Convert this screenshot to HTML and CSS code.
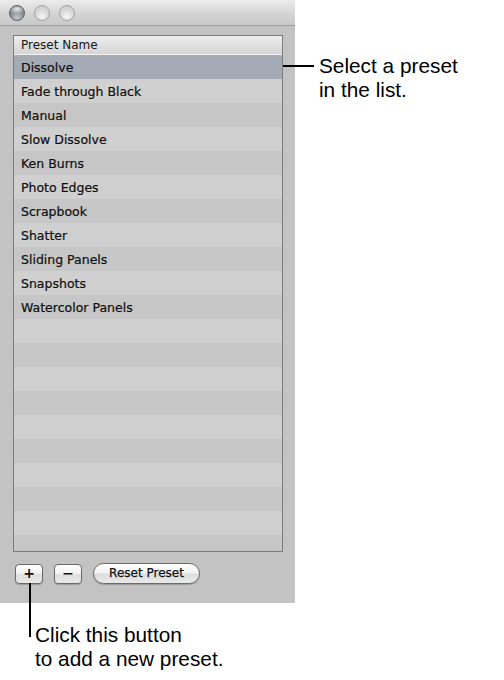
FILE: index.html
```html
<!DOCTYPE html>
<html>
<head>
<meta charset="utf-8">
<link rel="stylesheet" href="styles.css">
</head>
<body>
<div class="page">
  <div class="window">
    <div class="titlebar">
      <span class="light graphite"></span>
      <span class="light"></span>
      <span class="light"></span>
    </div>
    <div class="content">
      <div class="list">
        <div class="header">Preset Name</div>
        <div class="row selected">Dissolve</div>
        <div class="row">Fade through Black</div>
        <div class="row">Manual</div>
        <div class="row">Slow Dissolve</div>
        <div class="row">Ken Burns</div>
        <div class="row">Photo Edges</div>
        <div class="row">Scrapbook</div>
        <div class="row">Shatter</div>
        <div class="row">Sliding Panels</div>
        <div class="row">Snapshots</div>
        <div class="row">Watercolor Panels</div>
        <div class="row"></div>
        <div class="row"></div>
        <div class="row"></div>
        <div class="row"></div>
        <div class="row"></div>
        <div class="row"></div>
        <div class="row"></div>
        <div class="row"></div>
        <div class="row"></div>
        <div class="row"></div>
      </div>
      <div class="buttons">
        <button class="sq">+</button>
        <button class="sq">&minus;</button>
        <button class="pill">Reset Preset</button>
      </div>
    </div>
  </div>
  <div class="callout-right">
    <span class="hleader"></span>
    <div class="note">Select a preset<br>in the list.</div>
  </div>
  <div class="callout-bottom">
    <span class="vleader"></span>
    <div class="note low">Click this button<br>to add a new preset.</div>
  </div>
</div>
</body>
</html>
```
FILE: styles.css
```css
html, body {
  margin: 0;
  padding: 0;
  background: #ffffff;
}
.page {
  position: relative;
  width: 504px;
  height: 680px;
}
.window {
  width: 295px;
  height: 603px;
  background: #c3c3c3;
  display: flex;
  flex-direction: column;
}
.titlebar {
  height: 25px;
  border-bottom: 1px solid #9c9c9c;
  background: linear-gradient(#ececec, #d2d2d2 60%, #c9c9c9);
  display: flex;
  align-items: center;
  gap: 9px;
  padding-left: 9px;
  box-sizing: content-box;
}
.light {
  width: 16px;
  height: 16px;
  border-radius: 50%;
  box-sizing: border-box;
  border: 1px solid #a2a2a2;
  background: radial-gradient(circle at 50% 75%, #f6f6f6 0%, #dcdcdc 45%, #c8c8c8 100%);
  margin-top: 1px;
}
.light.graphite {
  border-color: #5a5e64;
  background:
    radial-gradient(ellipse 60% 35% at 50% 22%, rgba(255,255,255,0.85), rgba(255,255,255,0) 100%),
    radial-gradient(circle at 50% 85%, #c7cbd0 0%, #8c9197 45%, #646970 100%);
}
.content {
  padding: 9px 12px 0 13px;
  display: flex;
  flex-direction: column;
}
.list {
  width: 270px;
  height: 517px;
  box-sizing: border-box;
  border: 1px solid #7c7c7c;
  overflow: hidden;
  font-family: "DejaVu Sans", sans-serif;
  font-size: 12.5px;
  color: #0e0e0e;
  background: #c7c7c7;
}
.header {
  height: 18px;
  line-height: 18px;
  padding-left: 7px;
  background: linear-gradient(#efefef, #e0e0e0 50%, #d6d6d6);
  border-bottom: 1px solid #f4f4f4;
  font-size: 12px;
  color: #161616;
}
.row {
  height: 23px;
  padding-top: 1px;
  line-height: 24px;
  padding-left: 7px;
  background: #c6c6c6;
  -webkit-text-stroke: 0.2px #0e0e0e;
}
.row:nth-child(odd) {
  background: #d0d0d0;
}
.row.selected {
  background: #a4abb5;
}
.buttons {
  display: flex;
  align-items: center;
  gap: 11px;
  padding-left: 2px;
  margin-top: 11px;
}
.sq, .pill {
  box-sizing: border-box;
  border: 1px solid #6a6a6a;
  background: linear-gradient(#ffffff, #f2f2f2 45%, #dedede 55%, #e9e9e9);
  box-shadow: 0 1px 1px rgba(0,0,0,0.2);
  color: #111;
  padding: 0;
  font-family: "DejaVu Sans", sans-serif;
}
.sq {
  width: 28px;
  height: 20px;
  border-radius: 4px;
  font-size: 14px;
  font-weight: bold;
  line-height: 17px;
}
.pill {
  width: 107px;
  height: 21px;
  border-radius: 11px;
  font-size: 12px;
  line-height: 19px;
  -webkit-text-stroke: 0.25px #111;
}
.callout-right {
  position: absolute;
  left: 283px;
  top: 54px;
  display: flex;
  align-items: flex-start;
}
.hleader {
  width: 31px;
  height: 2px;
  background: #000;
  margin-top: 11px;
}
.note {
  font-family: "Liberation Sans", Arial, sans-serif;
  font-size: 20.8px;
  line-height: 24px;
  color: #000;
  margin-left: 5px;
}
.callout-bottom {
  position: absolute;
  left: 29px;
  top: 583px;
  display: flex;
  align-items: flex-start;
}
.vleader {
  width: 2px;
  height: 54px;
  background: #000;
}
.note.low {
  margin-left: 4px;
  padding-top: 40px;
}
```
